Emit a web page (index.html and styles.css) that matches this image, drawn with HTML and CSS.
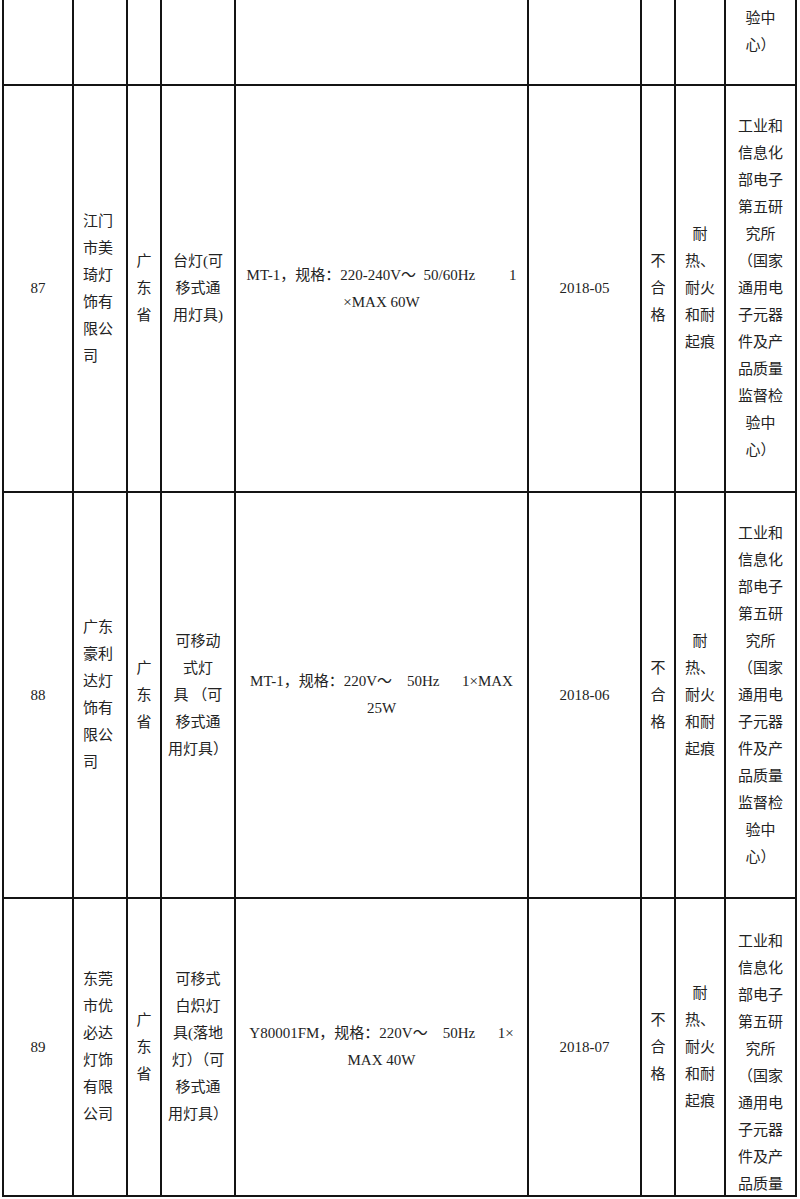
FILE: index.html
```html
<!DOCTYPE html>
<html lang="zh-CN">
<head>
<meta charset="utf-8">
<title>抽查结果</title>
<link rel="stylesheet" href="styles.css">
</head>
<body>
<table class="sheet">
  <colgroup>
    <col class="c-no"><col class="c-firm"><col class="c-prov"><col class="c-prod"><col class="c-spec"><col class="c-date"><col class="c-res"><col class="c-item"><col class="c-lab">
  </colgroup>
  <tbody>
    <tr class="row-tail">
      <td></td><td></td><td></td><td></td><td></td><td></td><td></td><td></td>
      <td class="lab lab-tail">验中<br>心）</td>
    </tr>
    <tr class="row-87">
      <td class="no">87</td>
      <td class="firm">江门<br>市美<br>琦灯<br>饰有<br>限公<br>司</td>
      <td class="prov">广<br>东<br>省</td>
      <td class="prod">台灯(可<br>移式通<br>用灯具)</td>
      <td class="spec">MT-1，规格：220-240V～  50/60Hz         1<br>×MAX 60W</td>
      <td class="date">2018-05</td>
      <td class="res">不<br>合<br>格</td>
      <td class="item">耐<br>热、<br>耐火<br>和耐<br>起痕</td>
      <td class="lab">工业和<br>信息化<br>部电子<br>第五研<br>究所<br>（国家<br>通用电<br>子元器<br>件及产<br>品质量<br>监督检<br>验中<br>心）</td>
    </tr>
    <tr class="row-88">
      <td class="no">88</td>
      <td class="firm">广东<br>豪利<br>达灯<br>饰有<br>限公<br>司</td>
      <td class="prov">广<br>东<br>省</td>
      <td class="prod">可移动<br>式灯<br>具 （可<br>移式通<br>用灯具）</td>
      <td class="spec">MT-1，规格：220V～    50Hz      1×MAX<br>25W</td>
      <td class="date">2018-06</td>
      <td class="res">不<br>合<br>格</td>
      <td class="item">耐<br>热、<br>耐火<br>和耐<br>起痕</td>
      <td class="lab">工业和<br>信息化<br>部电子<br>第五研<br>究所<br>（国家<br>通用电<br>子元器<br>件及产<br>品质量<br>监督检<br>验中<br>心）</td>
    </tr>
    <tr class="row-89">
      <td class="no">89</td>
      <td class="firm">东莞<br>市优<br>必达<br>灯饰<br>有限<br>公司</td>
      <td class="prov">广<br>东<br>省</td>
      <td class="prod">可移式<br>白炽灯<br>具(落地<br>灯）（可<br>移式通<br>用灯具）</td>
      <td class="spec">Y80001FM，规格：220V～    50Hz      1×<br>MAX 40W</td>
      <td class="date">2018-07</td>
      <td class="res">不<br>合<br>格</td>
      <td class="item">耐<br>热、<br>耐火<br>和耐<br>起痕</td>
      <td class="lab lab-cut"><div class="cut">工业和<br>信息化<br>部电子<br>第五研<br>究所<br>（国家<br>通用电<br>子元器<br>件及产<br>品质量</div></td>
    </tr>
  </tbody>
</table>
</body>
</html>
```

FILE: styles.css
```css
html, body {
  margin: 0;
  padding: 0;
  background: #ffffff;
}

body {
  font-family: "Liberation Serif", "Noto Sans CJK SC", serif;
  font-size: 15px;
  color: #232323;
  overflow: hidden;
}

.sheet {
  border-collapse: collapse;
  table-layout: fixed;
  width: 793px;
  margin-left: 2px;
}

.c-no   { width: 70px; }
.c-firm { width: 54px; }
.c-prov { width: 34px; }
.c-prod { width: 74px; }
.c-spec { width: 293px; }
.c-date { width: 113px; }
.c-res  { width: 34px; }
.c-item { width: 50px; }
.c-lab  { width: 71px; }

.sheet td {
  box-sizing: border-box;
  border: 2px solid #141414;
  padding: 0;
  text-align: center;
  vertical-align: middle;
  line-height: 27px;
  white-space: nowrap;
  overflow: hidden;
}

.row-tail td {
  border-top: none;
  height: 85px;
}

.row-87 td { height: 407px; }
.row-88 td { height: 406px; }
.row-89 td { height: 298px; }

.sheet td.firm {
  text-align: left;
  padding-left: 9px;
}

.sheet td.spec {
  white-space: pre;
}

.sheet td.lab-tail {
  vertical-align: top;
  padding-top: 5px;
}

.sheet td.lab-cut {
  vertical-align: top;
  padding-top: 29px;
}

.cut {
  height: 267px;
  overflow: hidden;
}
```
